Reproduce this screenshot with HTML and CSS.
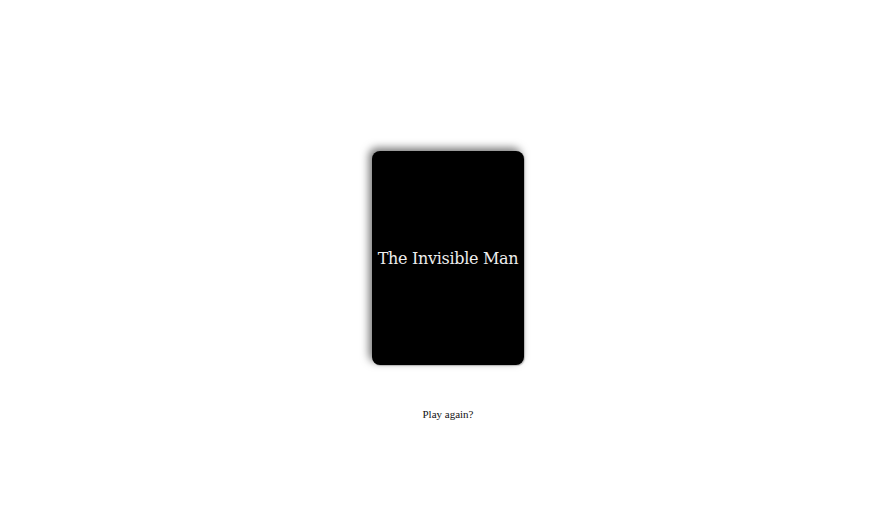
FILE: index.html
```html
<!DOCTYPE html>
<html>
<head>
<meta charset="utf-8">
<link rel="stylesheet" href="styles.css">
</head>
<body>
<main class="stage">
  <div class="card">
    <h1 class="title">The Invisible Man</h1>
  </div>
  <a class="again" href="#">Play again?</a>
</main>
</body>
</html>
```
FILE: styles.css
```css
html, body {
  margin: 0;
  padding: 0;
  background: #fff;
}
.stage {
  width: 896px;
  height: 521px;
  display: flex;
  flex-direction: column;
  align-items: center;
  padding-top: 151px;
  box-sizing: border-box;
}
.card {
  width: 152px;
  height: 214px;
  background: #000;
  border-radius: 8px;
  box-shadow: -3px -3px 8px rgba(0,0,0,0.55), 1px 1px 1px rgba(0,0,0,0.2);
  display: flex;
  align-items: center;
  justify-content: center;
}
.title {
  margin: 0;
  font-family: "DejaVu Serif", serif;
  font-weight: normal;
  font-size: 16px;
  letter-spacing: -0.3px;
  color: #eee;
  white-space: nowrap;
}
.again {
  margin-top: 43px;
  font-family: "Liberation Serif", serif;
  font-size: 11px;
  color: #111;
  text-decoration: none;
}
```
